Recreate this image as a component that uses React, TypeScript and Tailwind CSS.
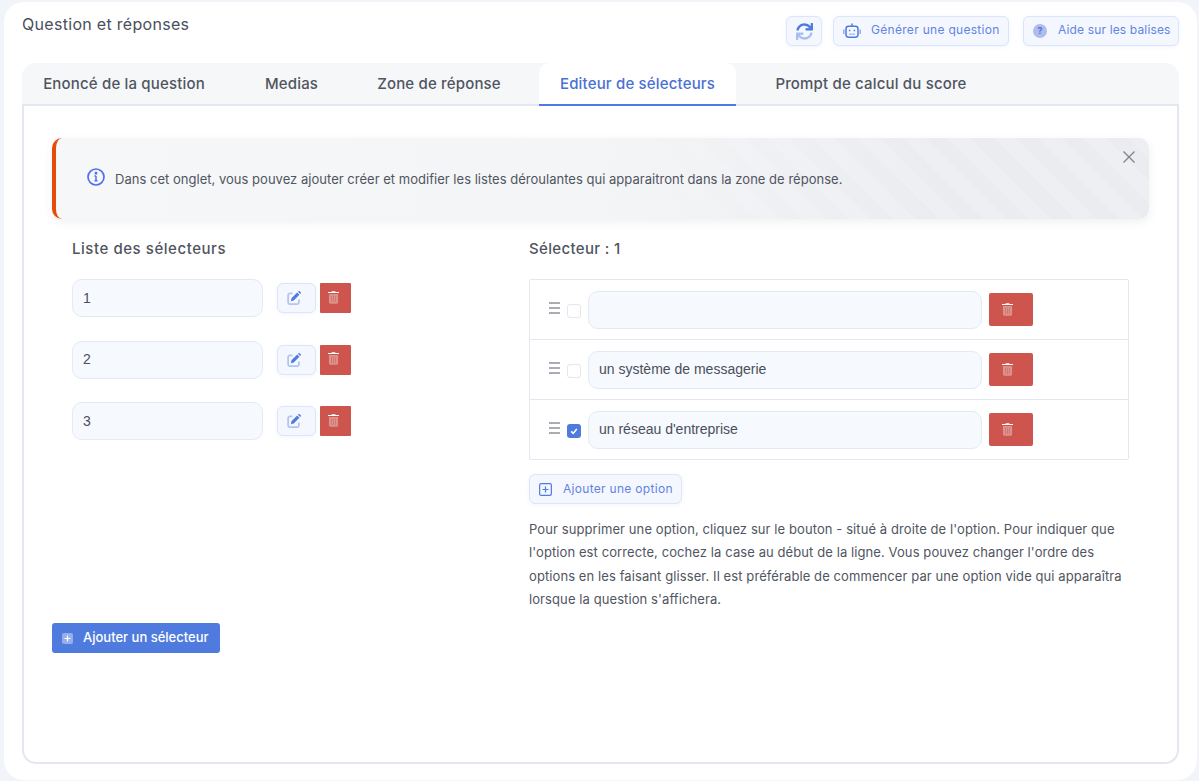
import React from 'react'

const font = "font-['Inter','Noto_Sans',sans-serif]"

const tabs = [
    { label: "Enoncé de la question", width: "w-[204px]" },
    { label: "Medias", width: "w-[95px]" },
    { label: "Zone de réponse", width: "w-[164px]" },
    { label: "Editeur de sélecteurs", width: "w-[197px]", active: true },
    { label: "Prompt de calcul du score", width: "w-[234px]" },
]

const RefreshIcon = () => (
    <svg viewBox="0 0 512 512" className="w-[17px] h-[17px]" fill="#4f7bdf">
        <path d="M440.65 12.57l4 82.77A247.16 247.16 0 0 0 255.83 8C134.73 8 33.91 94.92 12.29 209.82A12 12 0 0 0 24.09 224h49.05a12 12 0 0 0 11.67-9.26 175.91 175.91 0 0 1 317-56.94l-101.46-4.86a12 12 0 0 0-12.57 12v47.41a12 12 0 0 0 12 12H500a12 12 0 0 0 12-12V12a12 12 0 0 0-12-12h-47.37a12 12 0 0 0-11.98 12.57z" />
        <path opacity="0.45" d="M255.83 432a175.61 175.61 0 0 1-146-77.8l101.8 4.87a12 12 0 0 0 12.57-12v-47.4a12 12 0 0 0-12-12H12a12 12 0 0 0-12 12V500a12 12 0 0 0 12 12h47.35a12 12 0 0 0 12-12.6l-4.15-82.57A247.17 247.17 0 0 0 255.83 504c121.11 0 221.93-86.92 243.55-201.82a12 12 0 0 0-11.8-14.18h-49.05a12 12 0 0 0-11.67 9.26A175.86 175.86 0 0 1 255.83 432z" />
    </svg>
)

const RobotIcon = () => (
    <svg viewBox="0 0 18 15" className="w-[18px] h-[15px] mb-[2px]" fill="none" stroke="#4f7bdf" strokeWidth="1.500">
        <rect x="3" y="3.200" width="12" height="11" rx="2.600" />
        <path d="M9 3V0.600" />
        <path d="M0.800 6.500v4.500M17.200 6.500v4.500" strokeOpacity="0.6" />
        <path d="M6.600 6.800v1.500M11.400 6.800v1.500" />
        <path d="M6.500 11.200h1M8.500 11.200h1M10.500 11.200h1" strokeWidth="1.200" />
    </svg>
)

const EditIcon = () => (
    <svg viewBox="0 0 15 15" className="w-[14px] h-[14px]">
        <path d="M6 2.500H3.200A2 2 0 0 0 1.200 4.500v7.600a2 2 0 0 0 2 2h7.600a2 2 0 0 0 2-2V9" fill="none" stroke="#4f7bdf" strokeOpacity="0.4" strokeWidth="1.900" />
        <path d="M4.800 7.800 10.900 1.700l2.400 2.400-6.100 6.100-3 .7z M11.700 0.900l.5-.5a1 1 0 0 1 1.400 0l1 1a1 1 0 0 1 0 1.400l-.5.5z" fill="#4f7bdf" />
    </svg>
)

const TrashIcon = () => (
    <svg viewBox="0 0 12 14" className="w-[11px] h-[13px]" fill="#fff">
        <path d="M4.200 0.200h3.600l.5.900H12v1.100H0V1.100h3.700z" />
        <path opacity="0.35" d="M1 3.200h10v9.100a1.500 1.500 0 0 1-1.500 1.500h-7A1.500 1.500 0 0 1 1 12.300z" />
        <path opacity="0.25" d="M3.400 5h.9v7h-.9zM5.550 5h.9v7h-.9zM7.700 5h.9v7h-.9z" fill="#8f2f2a" />
    </svg>
)

const Input = ({ value, className }: { value: string; className: string }) => (
    <div className={`h-[38px] flex items-center px-[10px] bg-[#f6f9fd] border border-[#e4e9f3] rounded-[10px] font-['Liberation_Sans',sans-serif] text-[14px] text-[#4a4f5c] ${className}`}>
        {value}
    </div>
)

const SoftButton = ({ children, className }: { children: React.ReactNode; className: string }) => (
    <div className={`h-[30px] flex items-center bg-[#f5f7ff] border border-[#dbe5fb] rounded-[6px] shadow-[0_1px_4px_rgba(79,123,223,0.08)] text-[#5f84e2] ${className}`}>
        {children}
    </div>
)

const Selector = ({ value }: { value: string }) => (
    <div className="flex items-center">
        <Input value={value} className="w-[191px]" />
        <SoftButton className="w-[39px] ml-[14px] justify-center pr-[5px]">
            <EditIcon />
        </SoftButton>
        <div className="w-[31px] h-[30px] ml-[4px] bg-[#cd554e] rounded-[1px] flex items-center justify-center pr-[5px] pb-[2px]">
            <TrashIcon />
        </div>
    </div>
)

const Option = ({ value, checked, last }: { value: string; checked?: boolean; last?: boolean }) => (
    <div className={`flex items-center pl-[19px] ${last ? "h-[59px]" : "h-[60px] border-b border-[#e4e6f0]"}`}>
        <svg viewBox="0 0 11 12" className="w-[11px] h-[12px] mb-[3px]" stroke="#555a66" strokeWidth="1">
            <path d="M0 1h11M0 6h11M0 11h11" />
        </svg>
        <div className={`ml-[7px] w-[14px] h-[14px] mt-[3px] rounded-[3px] flex items-center justify-center ${checked ? "bg-[#4f7bdf]" : "bg-white border border-[#e4e6f0]"}`}>
            {checked && (
                <svg viewBox="0 0 10 10" className="w-[8px] h-[8px]" fill="none" stroke="#fff" strokeWidth="2">
                    <path d="M1.500 5.500 4 8l4.500-5.500" />
                </svg>
            )}
        </div>
        <Input value={value} className="w-[394px] ml-[7px]" />
        <div className="w-[44px] h-[33px] ml-[7px] bg-[#cd554e] rounded-[2px] flex items-center justify-center pr-[7px] pb-[1px]">
            <TrashIcon />
        </div>
    </div>
)

const App = () => {
    return (
        <div className={`w-[1199px] h-[781px] bg-[#f1f4f9] pt-[2px] pl-[4px] overflow-hidden ${font}`}>
            <div className="w-[1193px] h-[778px] bg-white rounded-[20px] pt-[14px] pl-[18px]">
                <div className="w-[1157px] h-[47px] flex justify-between">
                    <h1 className="text-[16px] leading-[16px] text-[#4a4f5c] tracking-[0.3px]">Question et réponses</h1>
                    <div className="flex text-[12px]">
                        <SoftButton className="w-[36px] justify-center">
                            <RefreshIcon />
                        </SoftButton>
                        <SoftButton className="w-[176px] ml-[11px] pl-[9px]">
                            <RobotIcon />
                            <span className="ml-[10px] mb-[2px] tracking-[0.3px]">Générer une question</span>
                        </SoftButton>
                        <SoftButton className="w-[156px] ml-[14px] pl-[9px]">
                            <span className="w-[14px] h-[14px] rounded-full bg-[#aebdee] text-[#4f6fd0] text-[9px] font-bold flex items-center justify-center">?</span>
                            <span className="ml-[11px] mb-[2px] tracking-[0.15px]">Aide sur les balises</span>
                        </SoftButton>
                    </div>
                </div>

                <div className="w-[1157px] h-[41px] bg-[#f6f7f9] rounded-t-[14px] flex gap-[18px] border-b-2 border-[#e4e7f2] box-content">
                    {tabs.map((tab) => (
                        <div
                            key={tab.label}
                            className={`${tab.width} flex items-center justify-center text-[15px] font-medium whitespace-nowrap tracking-[0.17px] ${
                                tab.active
                                    ? "bg-white text-[#4a70d4] border-b-2 border-[#4f7bdf] rounded-t-[10px] h-[43px] pt-[2px]"
                                    : "text-[#50555f] h-[41px] pt-[2px]"
                            }`}
                        >
                            {tab.label}
                        </div>
                    ))}
                </div>

                <div className="w-[1157px] h-[658px] border-2 border-t-0 border-[#e4e7f2] rounded-b-[14px] pt-[32px] pl-[28px]">
                    <div className="relative w-[1097px] h-[81px] flex items-center pl-[31px] pb-[3px] border-l-4 border-[#e64a0d] rounded-[10px] shadow-[0_3px_10px_rgba(60,70,90,0.08)] bg-[linear-gradient(90deg,#f6f7f9_0%,#f4f5f7_50%,rgba(244,245,247,0)_80%),repeating-linear-gradient(45deg,#eaecef_0_16px,#edeff2_16px_32px)]">
                        <svg viewBox="0 0 18 18" className="w-[18px] h-[18px]" fill="none" stroke="#4f6ff0" strokeWidth="1.700">
                            <circle cx="9" cy="9" r="8" />
                            <path d="M9 8v4.500M7.500 8H9M7.500 12.800h3" strokeWidth="1.500" />
                            <circle cx="9" cy="5.200" r="0.600" fill="#4f6ff0" />
                        </svg>
                        <p className="ml-[10px] mt-[5px] text-[13px] text-[#50555f] tracking-[0.02px]">
                            Dans cet onglet, vous pouvez ajouter créer et modifier les listes déroulantes qui apparaitront dans la zone de réponse.
                        </p>
                        <svg viewBox="0 0 12 12" className="absolute top-[13px] right-[14px] w-[12px] h-[12px]" stroke="#7d8087" strokeWidth="1.200">
                            <path d="M0.500 0.500l11 11M11.500 0.500l-11 11" />
                        </svg>
                    </div>

                    <div className="flex mt-[20px]">
                        <div className="w-[477px] pl-[20px]">
                            <h2 className="text-[15px] leading-[20px] font-medium text-[#50555f] tracking-[0.55px]">Liste des sélecteurs</h2>
                            <div className="mt-[20px] flex flex-col gap-[23.500px]">
                                <Selector value="1" />
                                <Selector value="2" />
                                <Selector value="3" />
                            </div>
                        </div>
                        <div className="w-[600px]">
                            <h2 className="text-[15px] leading-[20px] font-medium text-[#50555f] tracking-[0.35px]">Sélecteur : 1</h2>
                            <div className="mt-[20px] h-[181px] border border-[#e4e6f0] rounded-[2px]">
                                <Option value="" />
                                <Option value="un système de messagerie" />
                                <Option value="un réseau d'entreprise" checked last />
                            </div>
                            <SoftButton className="w-[153px] mt-[14px] pl-[9px] text-[12px]">
                                <svg viewBox="0 0 14 14" className="w-[13px] h-[13px]" fill="none" stroke="#4f7bdf" strokeWidth="1.300">
                                    <rect x="0.700" y="0.700" width="12.600" height="12.600" rx="1.500" />
                                    <path d="M7 3.800v6.400M3.800 7h6.400" />
                                </svg>
                                <span className="ml-[11px] tracking-[0.3px]">Ajouter une option</span>
                            </SoftButton>
                            <p className="mt-[14px] w-[600px] text-[13px] leading-[23.300px] text-[#50555f] tracking-[0.09px]">
                                Pour supprimer une option, cliquez sur le bouton - situé à droite de l'option. Pour indiquer que l'option est correcte, cochez la case au début de la ligne. Vous pouvez changer l'ordre des options en les faisant glisser. Il est préférable de commencer par une option vide qui apparaîtra lorsque la question s'affichera.
                            </p>
                        </div>
                    </div>

                    <div className="mt-[12px] w-[168px] h-[30px] bg-[#4f7bdf] rounded-[3px] flex items-center pl-[10px] text-white text-[13px] font-medium">
                        <span className="w-[11px] h-[11px] rounded-[2px] bg-white/40 flex items-center justify-center">
                            <svg viewBox="0 0 7 7" className="w-[7px] h-[7px]" stroke="#fff" strokeWidth="1.200">
                                <path d="M3.500 0.500v6M0.500 3.500h6" />
                            </svg>
                        </span>
                        <span className="ml-[10px]">Ajouter un sélecteur</span>
                    </div>
                </div>
            </div>
        </div>
    )
}

export default App
